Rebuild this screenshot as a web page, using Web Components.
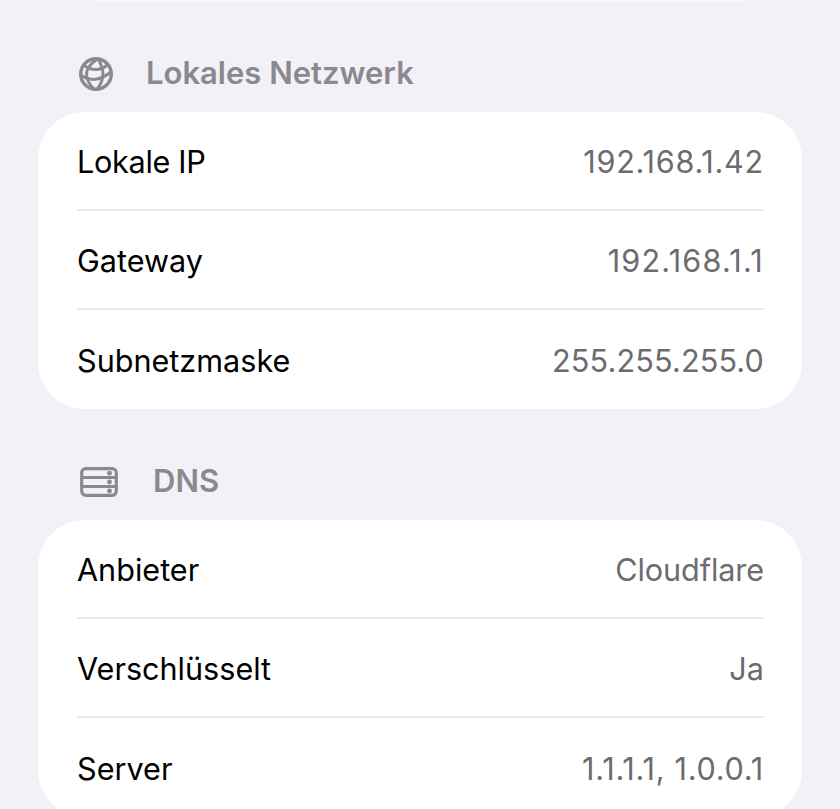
<!DOCTYPE html>
<html lang="de">
<head>
<meta charset="utf-8">
<title>Netzwerk</title>
<style>
html,body{margin:0;padding:0;height:809px;overflow:hidden;background:#f2f1f7;}
body{font-family:Inter,"Liberation Sans",sans-serif;}
</style>
</head>
<body>
<top-strip></top-strip>
<info-section label="Lokales Netzwerk" icon="globe">
    <info-row label="Lokale IP" value="192.168.1.42" track="0.75" ltrack="-0.3"></info-row>
    <info-row label="Gateway" value="192.168.1.1" track="1.2"></info-row>
    <info-row label="Subnetzmaske" value="255.255.255.0" track="0.15"></info-row>
</info-section>
<info-section label="DNS" icon="server" style="margin-top:55px">
    <info-row label="Anbieter" value="Cloudflare" track="-0.1"></info-row>
    <info-row label="Verschlüsselt" value="Ja"></info-row>
    <info-row label="Server" value="1.1.1.1, 1.0.0.1" track="0.75"></info-row>
</info-section>
<script>
const ICONS = {
    globe:`<svg width="36" height="36" viewBox="0 0 36 36" fill="none" stroke="#8a898f" stroke-width="3">
        <circle cx="18" cy="18" r="15.3" stroke-width="3.4"/>
        <path d="M20 2.5C12 8 8 13 8.5 19S12 29 16 33.5"/>
        <path d="M20 2.5C23 8 25 13 25 18S23 28 19 33.5"/>
        <path d="M5.5 9C11 13 15 14 19 13.5S27 12 30 8"/>
        <path d="M2.5 19C9 23.5 14 24 19 23S28 20 33.5 15.5"/>
    </svg>`,
    server:`<svg width="38" height="30" viewBox="0 0 38 30" fill="none" stroke="#8a898f" stroke-width="3.2">
        <rect x="1.7" y="1.7" width="34.6" height="26.6" rx="4"/>
        <path d="M2 10.5H36M2 19.5H36"/>
        <g fill="#8a898f" stroke="none">
            <circle cx="29.5" cy="6.2" r="2.4"/>
            <circle cx="29.5" cy="15" r="2.4"/>
            <circle cx="29.5" cy="24" r="2.4"/>
        </g>
    </svg>`
};

class TopStrip extends HTMLElement {
    constructor(){
        super();
        this.attachShadow({mode:'open'});
        this.shadowRoot.innerHTML=`
        <style>
        :host{display:block;height:56px;box-sizing:border-box;padding:0 95px;}
        div{height:2px;background:#f7f6fa;}
        </style>
        <div></div>`;
    }
}

class InfoSection extends HTMLElement {
    constructor(){
        super();
        this.attachShadow({mode:'open'});
    }
    connectedCallback(){
        const name = this.getAttribute('icon');
        this.shadowRoot.innerHTML=`
        <style>
        :host{display:block;}
        header{
            display:flex;
            align-items:center;
            height:36px;
            gap:${name=='globe'?'32px':'35px'};
            padding-left:${name=='globe'?'78px':'80px'};
            font-size:31px;
            font-weight:600;
            color:#8a898f;
        }
        header span{margin-top:-3px;}
        svg{display:block;flex:none;}
        .card{
            margin:20px 38px 0;
            background:#fff;
            border-radius:47px;
            padding:0 38px 0 39px;
        }
        </style>
        <header>${ICONS[name]}<span>${this.getAttribute('label')}</span></header>
        <div class="card"><slot></slot></div>`;
    }
}

class InfoRow extends HTMLElement {
    constructor(){
        super();
        this.attachShadow({mode:'open'});
    }
    connectedCallback(){
        const track = this.getAttribute('track') || 0;
        const ltrack = this.getAttribute('ltrack') || 0;
        this.shadowRoot.innerHTML=`
        <style>
        :host{
            display:flex;
            justify-content:space-between;
            align-items:center;
            height:99px;
            box-sizing:border-box;
            font-size:30.6px;
            border-bottom:2px solid #e9e9ec;
            color:#000;
        }
        :host(:last-child){border-bottom:none;}
        span{margin-top:1px;letter-spacing:${ltrack}px;}
        .val{color:#6c6c70;letter-spacing:${track}px;}
        </style>
        <span>${this.getAttribute('label')}</span>
        <span class="val">${this.getAttribute('value')}</span>`;
    }
}

customElements.define('top-strip', TopStrip);
customElements.define('info-row', InfoRow);
customElements.define('info-section', InfoSection);
</script>
</body>
</html>
